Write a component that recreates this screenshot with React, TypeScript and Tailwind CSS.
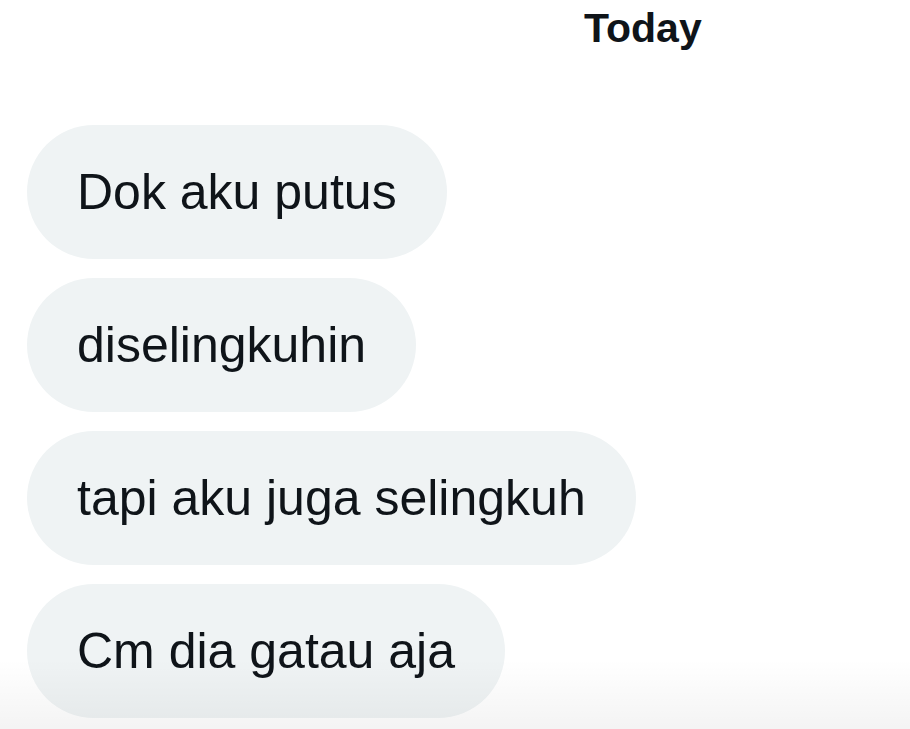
const messages = [
  'Dok aku putus',
  'diselingkuhin',
  'tapi aku juga selingkuh',
  'Cm dia gatau aja',
];

export default function App() {
  return (
    <div className="relative h-[729px] w-[910px] overflow-hidden bg-white font-['Liberation_Sans',Arial,sans-serif] text-[#0f1419]">
      <div className="pl-[584px] pt-[2px] text-[41px] font-bold leading-[52px]">Today</div>

      <div className="mt-[71px] flex flex-col items-start gap-[19px] pl-[27px]">
        {messages.map((m, i) => (
          <div
            key={i}
            className="rounded-full bg-[#eff3f4] px-[50px] py-[36px] text-[50px] leading-[62px] whitespace-nowrap"
          >
            {m}
          </div>
        ))}
      </div>

      <div className="pointer-events-none absolute bottom-0 left-0 h-[70px] w-full bg-gradient-to-b from-transparent to-black/[0.045]" />
    </div>
  );
}
